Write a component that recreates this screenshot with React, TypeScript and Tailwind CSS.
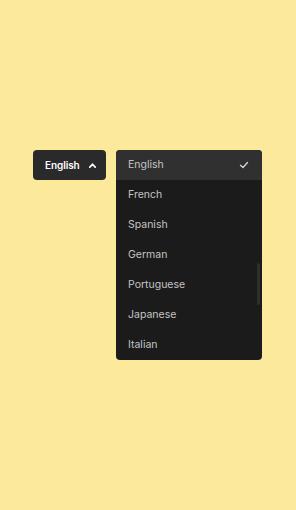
import React from "react";

const languages = ["English", "French", "Spanish", "German", "Portuguese", "Japanese", "Italian"];

const App: React.FC = () => {
  return (
    <div className="w-[296px] h-[510px] bg-[#fde99b] font-['Inter',sans-serif]">
      <div className="flex flex-row items-start gap-[10px] pt-[150px] pl-[33px]">
        {/* Trigger */}
        <button className="flex items-center justify-between w-[73px] h-[30px] rounded-[4px] bg-[#2a2a2a] pl-[12px] pr-[9px] text-white text-[10px] font-semibold tracking-[-0.1px]">
          <span>English</span>
          <svg width="9" height="9" viewBox="0 0 10 10" fill="none">
            <path d="M2 6.8 L5 3.6 L8 6.8" stroke="white" strokeWidth="1.9" strokeLinecap="round" strokeLinejoin="round" />
          </svg>
        </button>

        {/* Menu */}
        <div className="relative w-[146px] rounded-[4px] bg-[#1b1b1b] overflow-hidden">
          {languages.map((lang, i) => (
            <div
              key={lang}
              className={
                i === 0
                  ? "flex items-center justify-between h-[30px] pl-[12px] pr-[13px] bg-[#303030] text-[#c4c4c4] text-[10.5px]"
                  : "flex items-center justify-between h-[30px] pl-[12px] pr-[13px] text-[#c4c4c4] text-[10.5px]"
              }
            >
              <span>{lang}</span>
              {i === 0 && (
                <svg width="10" height="10" viewBox="0 0 10 10" fill="none">
                  <path d="M1.5 5.2 L4 7.5 L8.5 2.5" stroke="#d0d0d0" strokeWidth="1.4" strokeLinecap="round" strokeLinejoin="round" />
                </svg>
              )}
            </div>
          ))}
          <div className="absolute right-[2px] top-[113px] w-[3px] h-[42px] rounded-full bg-[#2e2e2e]" />
        </div>
      </div>
    </div>
  );
};

export default App;
